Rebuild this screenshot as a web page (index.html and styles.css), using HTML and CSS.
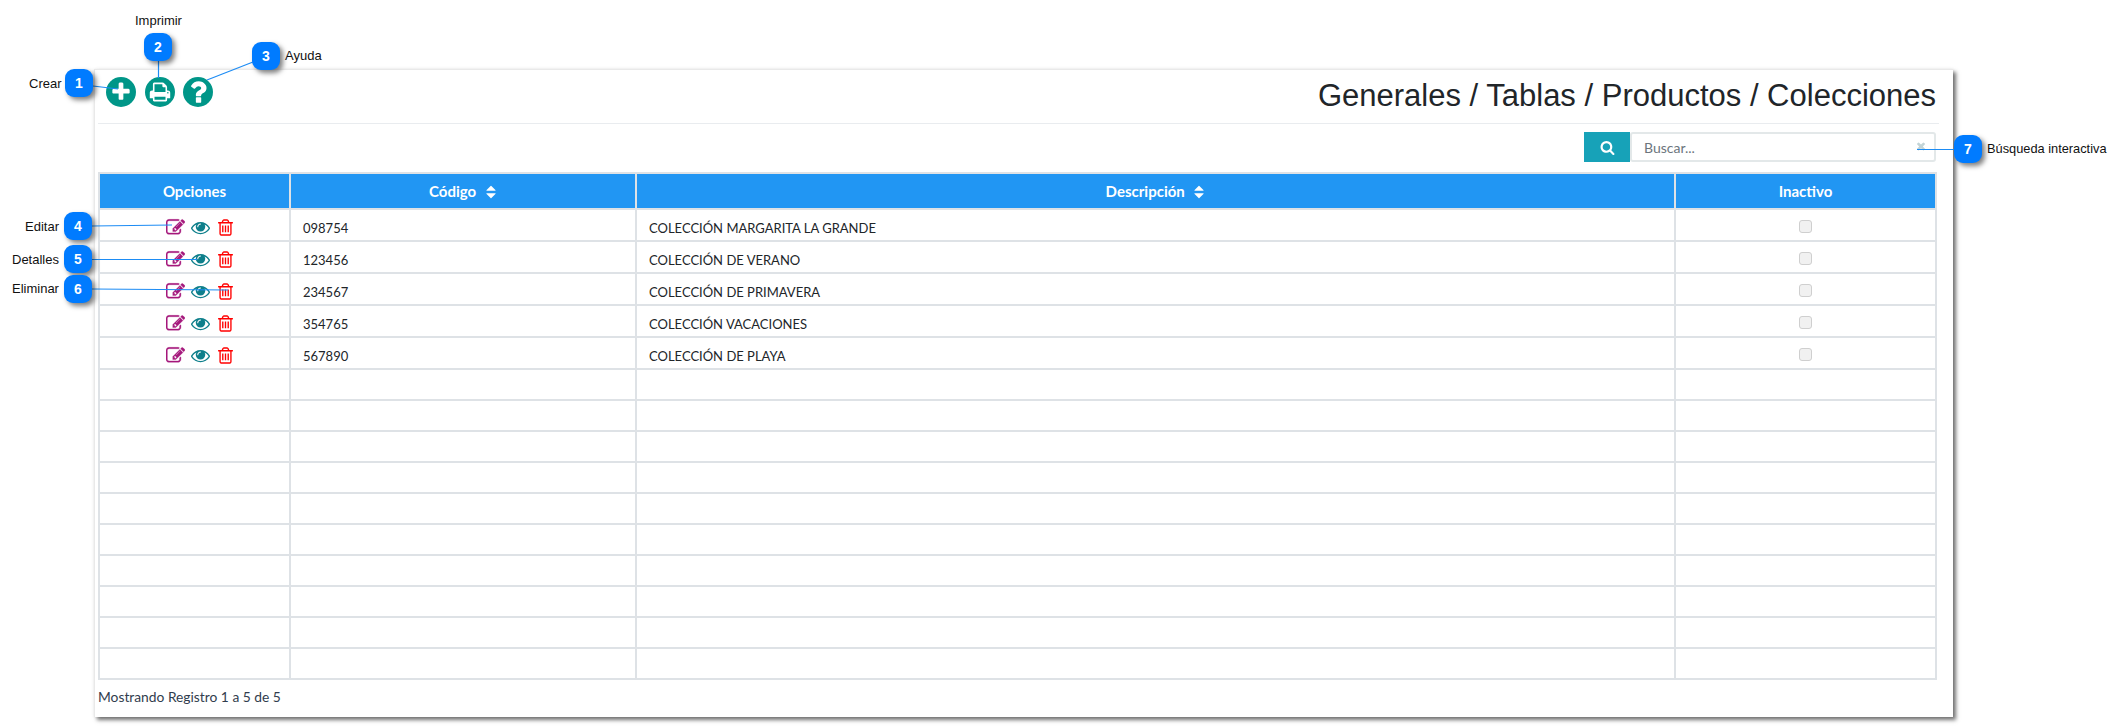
FILE: index.html
```html
<!DOCTYPE html>
<html lang="es">
<head>
<meta charset="utf-8">
<title>Colecciones</title>
<link rel="stylesheet" href="styles.css">
</head>
<body>
<svg class="defs" width="0" height="0" aria-hidden="true">
  <symbol id="i-edit" viewBox="0 0 1792 1792"><path d="M888 1184l116-116-152-152-116 116v56h96v96h56zm440-720q-16-16-33 1l-350 350q-17 17-1 33t33-1l350-350q17-17 1-33zm80 594v190q0 119-84.500 203.500t-203.500 84.500h-832q-119 0-203.500-84.500t-84.500-203.500v-832q0-119 84.500-203.500t203.500-84.500h832q63 0 117 25 15 7 18 23 3 17-9 29l-49 49q-14 14-32 8-23-6-45-6h-832q-66 0-113 47t-47 113v832q0 66 47 113t113 47h832q66 0 113-47t47-113v-126q0-13 9-22l64-64q15-15 35-7t20 29zm-96-738l288 288-672 672h-288v-288zm444 132l-92 92-288-288 92-92q28-28 68-28t68 28l152 152q28 28 28 68t-28 68z"/></symbol>
  <symbol id="i-eye" viewBox="0 0 1792 1792"><path d="M1664 960q-152-236-381-353 61 104 61 225 0 185-131.500 316.500t-316.500 131.500-316.500-131.500-131.500-316.500q0-121 61-225-229 117-381 353 133 205 333.500 326.500t434.500 121.500 434.500-121.500 333.500-326.500zm-720-384q0-20-14-34t-34-14q-125 0-214.500 89.500t-89.500 214.500q0 20 14 34t34 14 34-14 14-34q0-86 61-147t147-61q20 0 34-14t14-34zm848 384q0 34-20 69-140 230-376.500 368.500t-499.500 138.500-499.500-139-376.500-368q-20-35-20-69t20-69q140-229 376.500-368t499.500-139 499.500 139 376.500 368q20 35 20 69z"/></symbol>
  <symbol id="i-trash" viewBox="0 0 1792 1792"><path d="M704 736v576q0 14-9 23t-23 9h-64q-14 0-23-9t-9-23v-576q0-14 9-23t23-9h64q14 0 23 9t9 23zm256 0v576q0 14-9 23t-23 9h-64q-14 0-23-9t-9-23v-576q0-14 9-23t23-9h64q14 0 23 9t9 23zm256 0v576q0 14-9 23t-23 9h-64q-14 0-23-9t-9-23v-576q0-14 9-23t23-9h64q14 0 23 9t9 23zm128 724v-948h-896v948q0 22 7 40.500t14.500 27 10.500 8.500h832q3 0 10.500-8.500t14.500-27 7-40.500zm-672-1076h448l-48-117q-7-9-17-11h-317q-10 2-17 11zm928 32v64q0 14-9 23t-23 9h-96v948q0 83-47 143.500t-113 60.500h-832q-66 0-113-58.500t-47-141.500v-952h-96q-14 0-23-9t-9-23v-64q0-14 9-23t23-9h309l70-167q15-37 54-63t79-26h320q40 0 79 26t54 63l70 167h309q14 0 23 9t9 23z"/></symbol>
  <symbol id="i-sort" viewBox="0 0 1792 1792"><path d="M1408 1088q0 26-19 45l-448 448q-19 19-45 19t-45-19l-448-448q-19-19-19-45t19-45 45-19h896q26 0 45 19t19 45zm0-384q0 26-19 45t-45 19h-896q-26 0-45-19t-19-45 19-45l448-448q19-19 45-19t45 19l448 448q19 19 19 45z"/></symbol>
</svg>

<main class="panel">
  <header class="head">
    <div class="tools">
      <button class="round" type="button" aria-label="Crear"><svg viewBox="0 0 1792 1792"><path d="M1600 736v192q0 40-28 68t-68 28h-416v416q0 40-28 68t-68 28h-192q-40 0-68-28t-28-68v-416h-416q-40 0-68-28t-28-68v-192q0-40 28-68t68-28h416v-416q0-40 28-68t68-28h192q40 0 68 28t28 68v416h416q40 0 68 28t28 68z"/></svg></button>
      <button class="round" type="button" aria-label="Imprimir"><svg viewBox="0 0 1792 1792"><path d="M448 1536h896v-256h-896v256zm0-640h896v-384h-160q-40 0-68-28t-28-68v-160h-640v640zm1152 64q0-26-19-45t-45-19-45 19-19 45 19 45 45 19 45-19 19-45zm128 0v416q0 13-9.500 22.500t-22.500 9.500h-224v160q0 40-28 68t-68 28h-960q-40 0-68-28t-28-68v-160h-224q-13 0-22.500-9.500t-9.500-22.500v-416q0-79 56.500-135.500t135.500-56.500h64v-544q0-40 28-68t68-28h672q40 0 88 20t76 48l152 152q28 28 48 76t20 88v256h64q79 0 135.500 56.500t56.500 135.500z"/></svg></button>
      <button class="round round-q" type="button" aria-label="Ayuda"><svg viewBox="0 0 1792 1792"><path d="M1088 1256v240q0 16-12 28t-28 12h-240q-16 0-28-12t-12-28v-240q0-16 12-28t28-12h240q16 0 28 12t12 28zm316-600q0 54-15.500 101t-35 76.500-55 59.500-57.500 43.500-61 35.500q-41 23-68.500 65t-27.500 67q0 17-12 32.500t-28 15.500h-240q-15 0-25.500-18.500t-10.500-37.500v-45q0-83 65-156.500t143-108.500q59-27 84-56t25-76q0-42-46.500-74t-107.500-32q-65 0-108 29-35 25-107 115-13 16-31 16-12 0-25-8l-164-125q-13-10-15.500-25t5.500-28q160-266 464-266 80 0 161 31t146 83 106 127.500 41 158.500z"/></svg></button>
    </div>
    <h1 class="title">Generales / Tablas / Productos / Colecciones</h1>
  </header>

  <div class="search">
    <span class="search-btn"><svg viewBox="0 0 1792 1792"><path d="M1216 832q0-185-131.500-316.500t-316.500-131.500-316.500 131.500-131.500 316.500 131.500 316.500 316.500 131.500 316.500-131.500 131.500-316.500zm512 832q0 52-38 90t-90 38q-54 0-90-38l-343-342q-179 124-399 124-143 0-273.500-55.500t-225-150-150-225-55.500-273.500 55.500-273.500 150-225 225-150 273.500-55.500 273.500 55.500 225 150 150 225 55.500 273.500q0 220-124 399l343 343q37 37 37 90z"/></svg></span>
    <div class="search-field">
      <input class="search-input" type="text" placeholder="Buscar...">
      <svg class="clear" viewBox="0 0 1792 1792"><path d="M1490 1322q0 40-28 68l-136 136q-28 28-68 28t-68-28l-294-294-294 294q-28 28-68 28t-68-28l-136-136q-28-28-28-68t28-68l294-294-294-294q-28-28-28-68t28-68l136-136q28-28 68-28t68 28l294 294 294-294q28-28 68-28t68 28l136 136q28 28 28 68t-28 68l-294 294 294 294q28 28 28 68z"/></svg>
    </div>
  </div>

  <table class="grid">
    <colgroup><col class="c-a"><col class="c-b"><col class="c-c"><col class="c-d"></colgroup>
    <thead>
      <tr>
        <th>Opciones</th>
        <th>Código <svg class="sort"><use href="#i-sort"/></svg></th>
        <th>Descripción <svg class="sort"><use href="#i-sort"/></svg></th>
        <th>Inactivo</th>
      </tr>
    </thead>
    <tbody>
      <tr class="full">
        <td><div class="acts"><svg class="ic edit"><use href="#i-edit"/></svg><svg class="ic eye"><use href="#i-eye"/></svg><svg class="ic trash"><use href="#i-trash"/></svg></div></td>
        <td>098754</td><td>COLECCIÓN MARGARITA LA GRANDE</td><td class="mid"><input class="chk" type="checkbox" disabled></td>
      </tr>
      <tr class="full">
        <td><div class="acts"><svg class="ic edit"><use href="#i-edit"/></svg><svg class="ic eye"><use href="#i-eye"/></svg><svg class="ic trash"><use href="#i-trash"/></svg></div></td>
        <td>123456</td><td>COLECCIÓN DE VERANO</td><td class="mid"><input class="chk" type="checkbox" disabled></td>
      </tr>
      <tr class="full">
        <td><div class="acts"><svg class="ic edit"><use href="#i-edit"/></svg><svg class="ic eye"><use href="#i-eye"/></svg><svg class="ic trash"><use href="#i-trash"/></svg></div></td>
        <td>234567</td><td>COLECCIÓN DE PRIMAVERA</td><td class="mid"><input class="chk" type="checkbox" disabled></td>
      </tr>
      <tr class="full">
        <td><div class="acts"><svg class="ic edit"><use href="#i-edit"/></svg><svg class="ic eye"><use href="#i-eye"/></svg><svg class="ic trash"><use href="#i-trash"/></svg></div></td>
        <td>354765</td><td>COLECCIÓN VACACIONES</td><td class="mid"><input class="chk" type="checkbox" disabled></td>
      </tr>
      <tr class="full">
        <td><div class="acts"><svg class="ic edit"><use href="#i-edit"/></svg><svg class="ic eye"><use href="#i-eye"/></svg><svg class="ic trash"><use href="#i-trash"/></svg></div></td>
        <td>567890</td><td>COLECCIÓN DE PLAYA</td><td class="mid"><input class="chk" type="checkbox" disabled></td>
      </tr>
      <tr><td></td><td></td><td></td><td></td></tr>
      <tr><td></td><td></td><td></td><td></td></tr>
      <tr><td></td><td></td><td></td><td></td></tr>
      <tr><td></td><td></td><td></td><td></td></tr>
      <tr><td></td><td></td><td></td><td></td></tr>
      <tr><td></td><td></td><td></td><td></td></tr>
      <tr><td></td><td></td><td></td><td></td></tr>
      <tr><td></td><td></td><td></td><td></td></tr>
      <tr><td></td><td></td><td></td><td></td></tr>
      <tr><td></td><td></td><td></td><td></td></tr>
    </tbody>
  </table>
  <p class="foot">Mostrando Registro 1 a 5 de 5</p>
</main>

<svg class="leaders" viewBox="0 0 2122 726" aria-hidden="true">
  <line x1="93" y1="86" x2="118" y2="89"/>
  <line x1="158.500" y1="61" x2="158.500" y2="78"/>
  <line x1="253" y1="62" x2="207" y2="80"/>
  <line x1="92" y1="226" x2="172" y2="225"/>
  <line x1="92" y1="259.500" x2="197" y2="259.500"/>
  <line x1="92" y1="289" x2="228" y2="290"/>
  <line x1="1954" y1="149.500" x2="1917" y2="149.500"/>
</svg>

<span class="bubble b1">1</span>
<span class="bubble b2">2</span>
<span class="bubble b3">3</span>
<span class="bubble b4">4</span>
<span class="bubble b5">5</span>
<span class="bubble b6">6</span>
<span class="bubble b7">7</span>

<span class="note n1">Crear</span>
<span class="note n2">Imprimir</span>
<span class="note n3">Ayuda</span>
<span class="note n4">Editar</span>
<span class="note n5">Detalles</span>
<span class="note n6">Eliminar</span>
<span class="note n7">Búsqueda interactiva</span>
</body>
</html>
```
FILE: styles.css
```css
* { box-sizing: border-box; }
html, body { margin: 0; padding: 0; }
body {
  position: relative;
  width: 2122px;
  height: 726px;
  overflow: hidden;
  background: #fff;
  font-family: "Lato", "Liberation Sans", sans-serif;
  color: #212529;
  padding: 69px 0 0 94px;
}
.defs { position: absolute; }

.panel {
  width: 1859px;
  height: 648px;
  padding: 0 17px 0 3px;
  background: #fff;
  border-top: 1px solid #e9e9e9;
  border-left: 1px solid #e9e9e9;
  box-shadow: 3px 3px 4px rgba(0, 0, 0, .55), 0 0 3px rgba(0, 0, 0, .08);
}
.head {
  display: flex;
  justify-content: space-between;
  height: 54px;
  margin-right: -3px;
  padding: 7px 3px 0 8px;
  border-bottom: 1px solid #e9ecef;
}
.tools { display: flex; gap: 8.5px; }
.round {
  width: 30px;
  height: 30px;
  padding: 0;
  border: 0;
  border-radius: 50%;
  background: #009688;
  display: flex;
  align-items: center;
  justify-content: center;
  overflow: hidden;
}
.round svg { width: 22px; height: 22px; fill: #fff; flex: none; }
.round-q svg { width: 30px; height: 30px; }
.title {
  margin: 0;
  font: 400 31px/38px "Liberation Sans", Arial, sans-serif;
  color: #212529;
}

.search {
  display: flex;
  justify-content: flex-end;
  margin-top: 8px;
  height: 30px;
}
.search-btn {
  width: 46px;
  background: #17a2b8;
  display: flex;
  align-items: center;
  justify-content: center;
}
.search-btn svg { width: 15px; height: 15px; fill: #fff; }
.search-field { position: relative; width: 306px; }
.search-input {
  width: 100%;
  height: 100%;
  padding: 0 30px 0 12px;
  border: 2px solid #e3e8e9;
  border-radius: 3px;
  outline: 0;
  background: #fff;
  font: 14px "Lato", sans-serif;
  color: #212529;
}
.search-input::placeholder { color: #6c757d; opacity: 1; }
.clear {
  position: absolute;
  right: 9px;
  top: 8px;
  width: 12px;
  height: 12px;
  fill: #c3d4d6;
}

.grid {
  width: 1837px;
  margin-top: 10px;
  border-collapse: collapse;
  table-layout: fixed;
  font-size: 13px;
}
.c-a { width: 191px; }
.c-b { width: 346px; }
.c-c { width: 1039px; }
.c-d { width: 261px; }
.grid th, .grid td { border: 2px solid #dee2e6; }
.grid th {
  height: 36px;
  padding: 0;
  background: #2196f3;
  color: #fff;
  font-size: 15px;
  font-weight: 700;
  text-align: center;
}
.grid td {
  height: 31px;
  padding: 5px 0 0 12px;
  vertical-align: middle;
  line-height: 16px;
}
.full td { height: 32px; }
.grid td.mid { padding: 2px 0 0; text-align: center; line-height: 0; }
.sort { width: 16px; height: 16px; fill: #fff; vertical-align: -3px; margin: 0 -2px 0 3px; }
.acts {
  display: flex;
  justify-content: center;
  align-items: center;
  gap: 6px;
  margin-left: -1px;
}
.ic { width: 19px; height: 19px; stroke-width: 30; }
.edit { fill: #a5187c; stroke: #a5187c; }
.eye { fill: #0e7f8b; }
.trash { fill: #ff0000; }
.chk {
  appearance: none;
  width: 13px;
  height: 13px;
  margin: 0;
  background: #f1f1f1;
  border: 1px solid #cfcfcf;
  border-radius: 3px;
}
.foot {
  margin: 8px 0 0;
  font-size: 13.800px;
  line-height: 18px;
  color: #313c4d;
}

.leaders {
  position: absolute;
  left: 0;
  top: 0;
  width: 2122px;
  height: 726px;
  pointer-events: none;
}
.leaders line { stroke: #1d8cf4; stroke-width: 1.2; }

.bubble {
  position: absolute;
  width: 28px;
  height: 28px;
  border-radius: 9px;
  background: #007bff;
  color: #fff;
  font: 700 14px/28px "Liberation Sans", Arial, sans-serif;
  text-align: center;
  box-shadow: 3px 3px 5px rgba(0, 0, 0, .5);
}
.b1 { left: 65px; top: 69px; }
.b2 { left: 144px; top: 33px; }
.b3 { left: 252px; top: 42px; }
.b4 { left: 64px; top: 212px; }
.b5 { left: 64px; top: 245px; }
.b6 { left: 64px; top: 275px; }
.b7 { left: 1954px; top: 135px; }

.note {
  position: absolute;
  font: 13px/16px "Liberation Sans", Arial, sans-serif;
  color: #111;
  white-space: nowrap;
}
.n1 { left: 29px; top: 76px; }
.n2 { left: 135px; top: 13px; }
.n3 { left: 285px; top: 48px; }
.n4 { left: 25px; top: 219px; }
.n5 { left: 12px; top: 252px; }
.n6 { left: 12px; top: 281px; }
.n7 { left: 1987px; top: 141px; font-size: 12.800px; }
```
